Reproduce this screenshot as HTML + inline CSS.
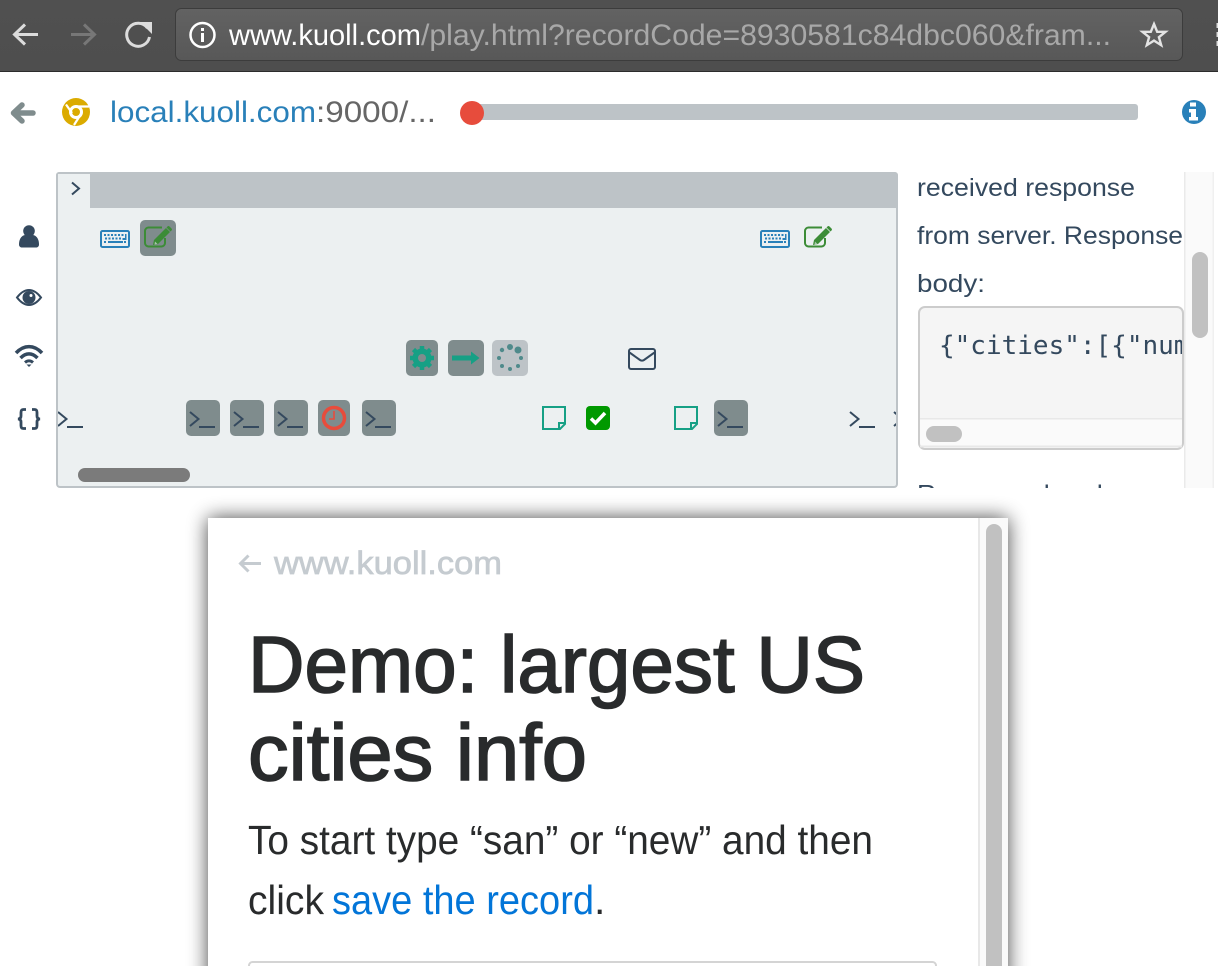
<!DOCTYPE html>
<html><head><meta charset="utf-8"><title>Kuoll</title>
<style>
html,body{margin:0;padding:0;width:1218px;height:966px;overflow:hidden;background:#fff}
svg{position:absolute;left:0;top:0;display:block}
text{font-family:"Liberation Sans",sans-serif}
.m{font-family:"DejaVu Sans Mono",monospace}
</style></head><body>
<svg width="1218" height="966" viewBox="0 0 1218 966" xmlns="http://www.w3.org/2000/svg">
<defs>
<linearGradient id="tb" x1="0" y1="0" x2="0" y2="1"><stop offset="0" stop-color="#505050"/><stop offset="1" stop-color="#4e4e4e"/></linearGradient>
<linearGradient id="ub" x1="0" y1="0" x2="0" y2="1"><stop offset="0" stop-color="#626262"/><stop offset="1" stop-color="#585858"/></linearGradient>
<filter id="sh" x="-10%" y="-10%" width="120%" height="120%"><feGaussianBlur stdDeviation="10"/></filter>
<clipPath id="tl"><rect x="58" y="174" width="838" height="312"/></clipPath>
<clipPath id="rp"><rect x="900" y="172" width="284" height="316"/></clipPath>
<clipPath id="cb"><rect x="920" y="308" width="262" height="110"/></clipPath>
<symbol id="term" viewBox="0 0 26 18" overflow="visible"><path d="M1 2L9.500 9L1 16" fill="none" stroke="#34495e" stroke-width="2"/><rect x="10" y="16" width="16" height="2" fill="#34495e"/></symbol>
<symbol id="kb" viewBox="0 0 30 18"><rect x="1" y="1" width="28" height="16" rx="1.500" fill="none" stroke="#2980b9" stroke-width="2"/><path d="M4 4h2v2H4zM7.500 4h2v2h-2zM11 4h2v2h-2zM14.500 4h2v2h-2zM18 4h2v2h-2zM21.500 4h2v2h-2zM25 4h1.500v6h-4V8H25zM5 7.500h2v2H5zM8.500 7.500h2v2h-2zM12 7.500h2v2h-2zM15.500 7.500h2v2h-2zM19 7.500h2v2h-2zM4 11h2v2H4zM8 11h15v2H8zM24 11h2v2h-2z" fill="#2980b9"/></symbol>
<symbol id="edit" viewBox="0 0 28 22"><path d="M21 12v5a3.500 3.500 0 0 1-3.500 3.500H4.500A3.500 3.500 0 0 1 1 17V5a3.500 3.500 0 0 1 3.500-3.500H18" fill="none" stroke="#3c8c37" stroke-width="2"/><path d="M10 14l12-12 4 4-12 12-5 1z" fill="#3c8c37"/><path d="M23.500 .5a1.500 1.500 0 0 1 2 0l2 2a1.500 1.500 0 0 1 0 2l-1 1-4-4z" fill="#3c8c37"/><path d="M11 15.500l2.500 2.500-3 .5z" fill="#ecf0f1" opacity=".6"/></symbol>
<symbol id="note" viewBox="0 0 24 24"><path d="M1 1h22v17l-5 5H1z" fill="none" stroke="#16a085" stroke-width="2"/><path d="M23 17h-6v6" fill="none" stroke="#16a085" stroke-width="2"/></symbol>
</defs>

<!-- browser toolbar -->
<rect width="1218" height="71" fill="url(#tb)"/>
<rect y="71" width="1218" height="1" fill="#2c2c2c"/>
<rect x="175.500" y="8.500" width="1007" height="52" rx="6" fill="url(#ub)" stroke="#3c3c3c"/>
<path d="M38 34.500H15M25 24.500L14.500 34.500L25 44.500" fill="none" stroke="#dcdcdc" stroke-width="3"/>
<path d="M94 34.500H71M84 24.500L94.500 34.500L84 44.500" fill="none" stroke="#777" stroke-width="3"/>
<path d="M147.500 28A11.500 11.500 0 1 0 149.500 37" fill="none" stroke="#dcdcdc" stroke-width="3"/>
<path d="M140 22h12v12z" fill="#dcdcdc"/>
<circle cx="202.500" cy="35" r="12" fill="none" stroke="#fff" stroke-width="2.500"/>
<rect x="201" y="33" width="3" height="9" fill="#fff"/><rect x="201" y="28" width="3" height="3" fill="#fff"/>
<text x="229" y="45" font-size="30" fill="#fff" textLength="192" lengthAdjust="spacingAndGlyphs">www.kuoll.com</text>
<text x="421" y="45" font-size="30" fill="#a8a8a8" textLength="690" lengthAdjust="spacingAndGlyphs">/play.html?recordCode=8930581c84dbc060&amp;fram...</text>
<path d="M1154 24l3.200 7.800h8.300l-6.600 5.400 2.300 8-7.200-4.600-7.200 4.600 2.300-8-6.600-5.400h8.300z" fill="none" stroke="#e4e4e4" stroke-width="2.400"/>
<rect x="1216.500" y="23" width="2" height="5" fill="#ddd"/><rect x="1216.500" y="32" width="2" height="5" fill="#ddd"/><rect x="1216.500" y="41" width="2" height="5" fill="#ddd"/>

<!-- player row -->
<path d="M33 113H15M22 105L13.500 113L22 121" fill="none" stroke="#7f8c8d" stroke-width="5.500" stroke-linecap="round" stroke-linejoin="round"/>
<circle cx="76" cy="112" r="14" fill="#dbab00"/>
<circle cx="76" cy="112" r="5.500" fill="none" stroke="#fff" stroke-width="3"/>
<path d="M66 104.500L72 113M75 106.500H89M81 114L74 125" fill="none" stroke="#fff" stroke-width="2.200"/>
<text x="110" y="122" font-size="30" fill="#2980b9" textLength="206" lengthAdjust="spacingAndGlyphs">local.kuoll.com</text>
<text x="316" y="122" font-size="30" fill="#666" textLength="120" lengthAdjust="spacingAndGlyphs">:9000/...</text>
<rect x="472" y="104" width="666" height="16" rx="3" fill="#bdc3c7"/>
<circle cx="472" cy="113" r="12" fill="#e74c3c"/>
<circle cx="1194" cy="112" r="12" fill="#2980b9"/>
<path d="M1190 102.500h6v4h-6zM1189 109h7v8h2v3.500h-9V117h2v-4.500h-2z" fill="#fff"/>

<!-- left icons -->
<circle cx="29" cy="231" r="5.800" fill="#34495e"/>
<path d="M19 244.500c0-7 4-9.500 6.500-9.500h7c2.500 0 6.500 2.500 6.500 9.500 0 2-1.500 3-3 3H22c-1.500 0-3-1-3-3z" fill="#34495e"/>
<path d="M17 297.500C22 291 26 290 29 290s7 1 12 7.500C36 304 32 305 29 305s-7-1-12-7.500z" fill="none" stroke="#34495e" stroke-width="2"/>
<circle cx="29" cy="297.500" r="6.500" fill="#34495e"/><circle cx="31" cy="295.500" r="1.500" fill="#fff"/>
<path d="M16 353C24 344.500 34 344.500 42 353" fill="none" stroke="#34495e" stroke-width="3.500"/>
<path d="M20.500 358C26 352.500 32 352.500 37.500 358" fill="none" stroke="#34495e" stroke-width="3.500"/>
<path d="M25 362.500C27.500 360.300 30.500 360.300 33 362.500" fill="none" stroke="#34495e" stroke-width="3"/>
<path d="M26.500 364.500h5L29 367z" fill="#34495e"/>
<path d="M26 409.500h-2.500c-2 0-2.500 1-2.500 3v3.500c0 2-1 2.800-3 3 2 .2 3 1 3 3v3.500c0 2 .5 3 2.500 3H26M32 409.500h2.500c2 0 2.500 1 2.500 3v3.500c0 2 1 2.800 3 3-2 .2-3 1-3 3v3.500c0 2-.5 3-2.500 3H32" fill="none" stroke="#34495e" stroke-width="2.800"/>

<!-- timeline -->
<rect x="57" y="173" width="840" height="314" rx="3" fill="#ecf0f1" stroke="#bdc3c7" stroke-width="2"/>
<path d="M56 208V175a3 3 0 0 1 3-3h836a3 3 0 0 1 3 3v33z" fill="#bdc3c7"/>
<rect x="58" y="174" width="32" height="34" fill="#ecf0f1"/>
<path d="M72 182.500L79 188.500L72 194.500" fill="none" stroke="#34495e" stroke-width="2"/>
<g clip-path="url(#tl)">
<use href="#kb" x="100" y="230" width="30" height="18"/>
<rect x="140" y="220" width="36" height="36" rx="5" fill="#7f8c8d"/>
<use href="#edit" x="144" y="226" width="28" height="22"/>
<use href="#kb" x="760" y="230" width="30" height="18"/>
<use href="#edit" x="804" y="226" width="28" height="22"/>

<rect x="406" y="340" width="32" height="36" rx="5" fill="#7f8c8d"/>
<circle cx="422" cy="358" r="7" fill="none" stroke="#16a085" stroke-width="5"/>
<path d="M422 346v24M410 358h24M413.500 349.500l17 17M430.500 349.500l-17 17" stroke="#16a085" stroke-width="4.500"/>
<circle cx="422" cy="358" r="4" fill="#7f8c8d"/>
<rect x="448" y="340" width="36" height="36" rx="5" fill="#7f8c8d"/>
<path d="M452 355.500h19v-4l8.500 6.500-8.500 6.500v-4h-19z" fill="#16a085"/>
<rect x="492" y="340" width="36" height="36" rx="5" fill="#bdc3c7"/>
<g fill="#4f8a8b"><circle cx="510" cy="347" r="3"/><circle cx="518" cy="350" r="3.500"/><circle cx="502" cy="350" r="2.200"/><circle cx="499" cy="358" r="2"/><circle cx="521" cy="358" r="2"/><circle cx="502" cy="366" r="2"/><circle cx="518" cy="366" r="2"/><circle cx="510" cy="369" r="2"/></g>

<path d="M629 351a2 2 0 0 1 2-2h22a2 2 0 0 1 2 2v16a2 2 0 0 1-2 2h-22a2 2 0 0 1-2-2z" fill="none" stroke="#34495e" stroke-width="2"/>
<path d="M629.500 352.500l10.500 7.500q2 1.300 4 0l10.500-7.500" fill="none" stroke="#34495e" stroke-width="2"/>

<use href="#term" x="57" y="410" width="26" height="18"/>
<rect x="186" y="400" width="34" height="36" rx="5" fill="#7f8c8d"/><use href="#term" x="189" y="410" width="26" height="18"/>
<rect x="230" y="400" width="34" height="36" rx="5" fill="#7f8c8d"/><use href="#term" x="233" y="410" width="26" height="18"/>
<rect x="274" y="400" width="34" height="36" rx="5" fill="#7f8c8d"/><use href="#term" x="277" y="410" width="26" height="18"/>
<rect x="318" y="400" width="32" height="36" rx="5" fill="#7f8c8d"/>
<circle cx="334" cy="418" r="10.500" fill="none" stroke="#e74c3c" stroke-width="3.500"/>
<path d="M334 411v8h-5" fill="none" stroke="#e74c3c" stroke-width="1.600"/>
<rect x="362" y="400" width="34" height="36" rx="5" fill="#7f8c8d"/><use href="#term" x="365" y="410" width="26" height="18"/>
<use href="#note" x="542" y="406" width="24" height="24"/>
<rect x="586" y="406" width="24" height="24" rx="4" fill="#009900"/>
<path d="M591 418.500l4.500 4.500 9.500-10" fill="none" stroke="#fff" stroke-width="3.500"/>
<use href="#note" x="674" y="406" width="24" height="24"/>
<rect x="714" y="400" width="34" height="36" rx="5" fill="#7f8c8d"/><use href="#term" x="717" y="410" width="26" height="18"/>
<use href="#term" x="849" y="410" width="26" height="18"/>
<use href="#term" x="893" y="410" width="26" height="18"/>
<rect x="78" y="468" width="112" height="14" rx="7" fill="#7b7b7b"/>
</g>

<!-- right panel -->
<rect x="1184" y="172" width="30" height="316" fill="#fafafa"/>
<rect x="1184" y="172" width="1.500" height="316" fill="#eaeaea"/>
<rect x="1212.500" y="172" width="1.500" height="316" fill="#f0f0f0"/>
<rect x="1192" y="252" width="16" height="86" rx="8" fill="#c1c1c1"/>
<g clip-path="url(#rp)" fill="#34495e" font-size="25">
<text x="917" y="196" textLength="218" lengthAdjust="spacingAndGlyphs">received response</text>
<text x="917" y="244" textLength="266" lengthAdjust="spacingAndGlyphs">from server. Response</text>
<text x="917" y="292" textLength="68" lengthAdjust="spacingAndGlyphs">body:</text>
<text x="917" y="502.500" textLength="230" lengthAdjust="spacingAndGlyphs">Response headers:</text>
</g>
<rect x="919" y="307" width="264" height="142" rx="6" fill="#f5f5f5" stroke="#cccccc" stroke-width="2"/>
<path d="M920 418.500h262V443a5 5 0 0 1-5 5H925a5 5 0 0 1-5-5z" fill="#fafafa"/>
<rect x="920" y="418" width="262" height="1.500" fill="#e8e8e8"/>
<rect x="920" y="445.500" width="262" height="2" fill="#e8e8e8"/>
<rect x="926" y="426" width="36" height="16" rx="8" fill="#c1c1c1"/>
<g clip-path="url(#cb)"><text class="m" x="939" y="354" font-size="26" fill="#34495e">{"cities":[{"num</text></g>

<!-- popup -->
<rect x="208" y="518" width="800" height="470" fill="#000" opacity=".72" filter="url(#sh)"/>
<rect x="208" y="518" width="800" height="448" fill="#fff"/>
<rect x="978" y="518" width="30" height="448" fill="#fafafa"/>
<rect x="978" y="518" width="2" height="448" fill="#e8e8e8"/>
<path d="M986 966V532a8 8 0 0 1 16 0v434z" fill="#c1c1c1"/>
<path d="M261 563.500H241M248.500 555.500L240.500 563.500L248.500 571.500" fill="none" stroke="#c5cbd0" stroke-width="3"/>
<text x="274" y="574" font-size="32" fill="#c5cbd0" stroke="#c5cbd0" stroke-width=".7" textLength="228" lengthAdjust="spacingAndGlyphs">www.kuoll.com</text>
<text x="248" y="692" font-size="80" fill="#292b2c" stroke="#292b2c" stroke-width="1.600" textLength="617" lengthAdjust="spacingAndGlyphs">Demo: largest US</text>
<text x="248" y="780" font-size="80" fill="#292b2c" stroke="#292b2c" stroke-width="1.600" textLength="339" lengthAdjust="spacingAndGlyphs">cities info</text>
<text x="248" y="854" font-size="41" fill="#292b2c" textLength="625" lengthAdjust="spacingAndGlyphs">To start type “san” or “new” and then</text>
<text x="248" y="914" font-size="41" fill="#292b2c" textLength="76" lengthAdjust="spacingAndGlyphs">click</text>
<text x="332" y="914" font-size="41" fill="#0275d8" textLength="262" lengthAdjust="spacingAndGlyphs">save the record</text>
<text x="594" y="914" font-size="41" fill="#292b2c">.</text>
<path d="M249 968v-2.500a3.500 3.500 0 0 1 3.500-3.500h680a3.500 3.500 0 0 1 3.500 3.500v2.500" fill="#fff" stroke="#d4d4d4" stroke-width="2"/>
</svg>
</body></html>
